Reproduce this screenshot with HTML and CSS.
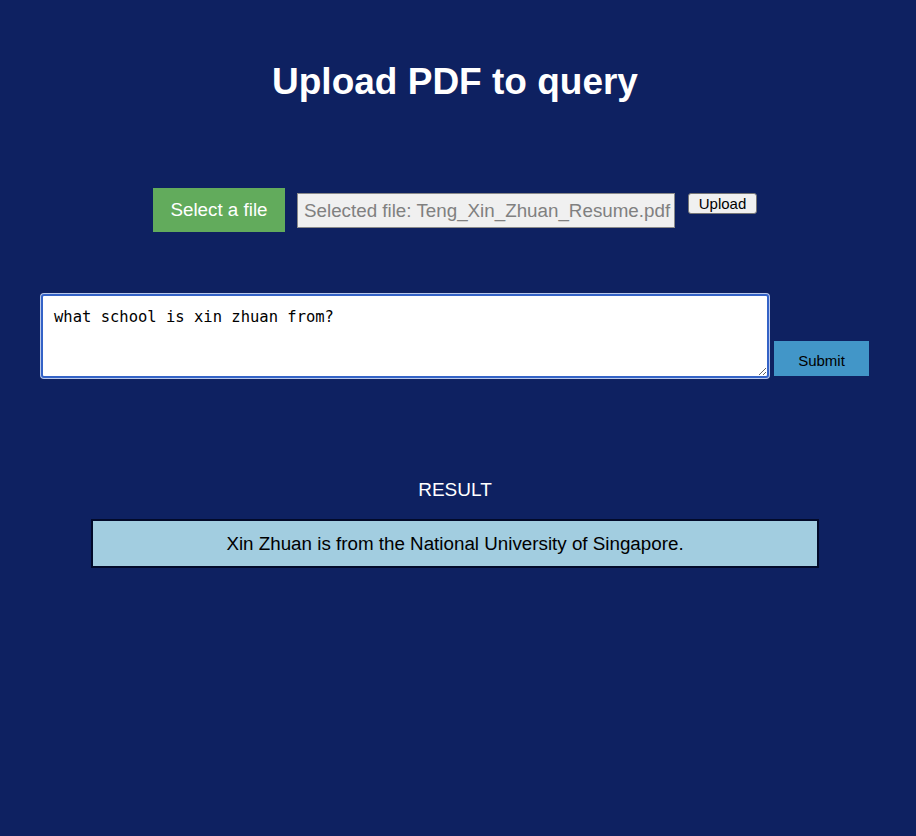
FILE: index.html
```html
<!DOCTYPE html>
<html>
<head>
<meta charset="utf-8">
<title>Upload PDF to query</title>
<link rel="stylesheet" href="styles.css">
</head>
<body>
<div class="page">
  <h1 class="title">Upload PDF to query</h1>
  <div class="upload-row">
    <label class="select-btn">Select a file</label>
    <div class="file-name">Selected file: Teng_Xin_Zhuan_Resume.pdf</div>
    <button class="upload-btn">Upload</button>
  </div>
  <div class="query-row">
    <textarea class="query">what school is xin zhuan from?</textarea>
    <button class="submit-btn">Submit</button>
  </div>
  <div class="result-label">RESULT</div>
  <div class="result-box">Xin Zhuan is from the National University of Singapore.</div>
</div>
</body>
</html>
```

FILE: styles.css
```css
html, body {
  margin: 0;
  padding: 0;
  background: #0e2161;
  height: 100%;
}
.page {
  width: 910px;
  font-family: "Liberation Sans", Arial, sans-serif;
  display: flex;
  flex-direction: column;
  align-items: center;
}
.title {
  margin: 0;
  padding-top: 61px;
  font-size: 37px;
  line-height: 42px;
  font-weight: bold;
  color: #ffffff;
}
.upload-row {
  margin-top: 85px;
  display: flex;
  align-items: flex-start;
}
.select-btn {
  height: 44px;
  width: 132px;
  box-sizing: border-box;
  display: flex;
  align-items: center;
  justify-content: center;
  background: #62ab5c;
  color: #ffffff;
  font-size: 18.8px;
}
.file-name {
  margin-left: 12px;
  margin-top: 5px;
  width: 378px;
  height: 35px;
  box-sizing: border-box;
  border: 1px solid #8a8a8a;
  background: #f0f0f0;
  color: #808080;
  font-size: 18.8px;
  line-height: 33px;
  padding-left: 6px;
  white-space: nowrap;
  overflow: hidden;
}
.upload-btn {
  margin-left: 13px;
  margin-top: 5px;
  width: 69px;
  height: 21px;
  padding: 0;
  font-family: "Liberation Sans", Arial, sans-serif;
  font-size: 15px;
  line-height: 19px;
  background: #f0f0f0;
  border: 1px solid #767676;
  border-radius: 3px;
  color: #000;
}
.query-row {
  margin-top: 62px;
  display: flex;
  align-items: flex-end;
}
.query {
  display: block;
  width: 728px;
  height: 84px;
  box-sizing: border-box;
  margin: 0;
  border: 2px solid #3463c7;
  border-radius: 3px;
  box-shadow: 0 0 0 1px #b9c8ea;
  outline: none;
  padding: 12px 11px 10px;
  font-family: "DejaVu Sans Mono", monospace;
  font-size: 15.5px;
  line-height: 19px;
  color: #000;
  background: #fff;
  resize: vertical;
}
.submit-btn {
  margin-left: 5px;
  margin-bottom: 2px;
  width: 95px;
  height: 35px;
  border: none;
  background: #4296c8;
  color: #000;
  font-family: "Liberation Sans", Arial, sans-serif;
  font-size: 15px;
  padding-top: 5px;
}
.result-label {
  margin-top: 101px;
  color: #ffffff;
  font-size: 19px;
  line-height: 21px;
}
.result-box {
  margin-top: 19px;
  width: 728px;
  height: 49px;
  box-sizing: border-box;
  border: 2px solid #020a2a;
  background: #a2cde0;
  color: #000;
  font-size: 18.8px;
  padding-top: 1px;
  display: flex;
  align-items: center;
  justify-content: center;
}
```
